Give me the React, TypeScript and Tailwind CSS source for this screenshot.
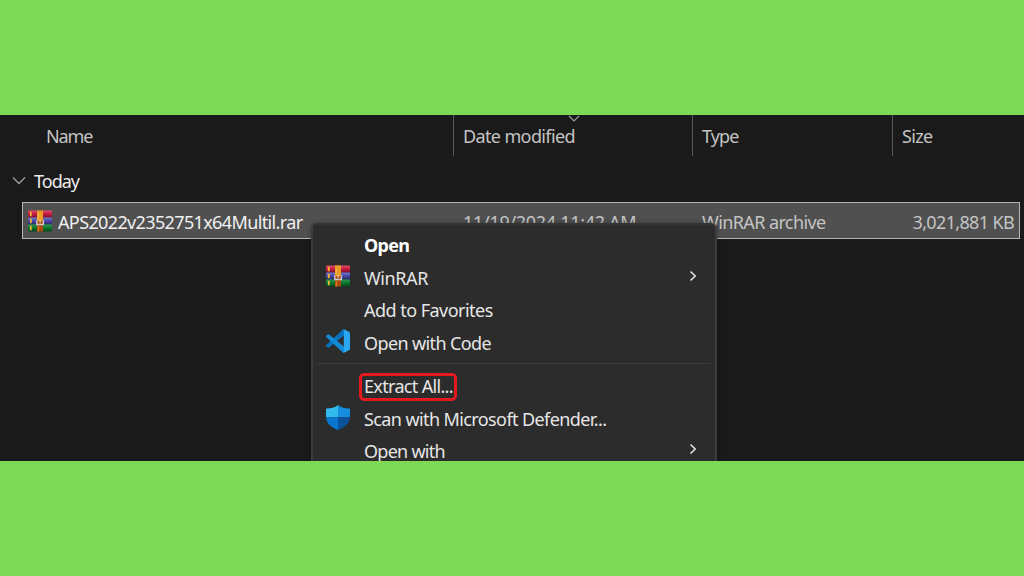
import type { ReactNode } from "react";

function ArchiveIcon() {
  return (
    <svg viewBox="0 0 24 22" className="block h-[22px] w-6 shrink-0">
      <defs>
        <linearGradient id="red" x1="0" y1="0" x2="0" y2="1">
          <stop offset="0" stopColor="#e0506a" />
          <stop offset=".45" stopColor="#cb1f45" />
          <stop offset="1" stopColor="#7a1029" />
        </linearGradient>
        <linearGradient id="blue" x1="0" y1="0" x2="0" y2="1">
          <stop offset="0" stopColor="#7878cc" />
          <stop offset=".45" stopColor="#4a4aae" />
          <stop offset="1" stopColor="#292665" />
        </linearGradient>
        <linearGradient id="green" x1="0" y1="0" x2="0" y2="1">
          <stop offset="0" stopColor="#2f9a50" />
          <stop offset=".45" stopColor="#0b7a31" />
          <stop offset="1" stopColor="#06461b" />
        </linearGradient>
      </defs>
      <rect x="0" y="0.5" width="24" height="7" rx="0.8" fill="url(#red)" />
      <rect x="0" y="7.5" width="24" height="7" rx="0.8" fill="url(#blue)" />
      <rect x="0" y="14.5" width="24" height="7" rx="0.8" fill="url(#green)" />
      <path d="M2.8 1.7v4.6M2.8 8.7v4.6M2.8 15.7v4.6" stroke="#f5b52c" strokeWidth="1.8" />
      <rect x="9" y="0.5" width="6" height="21" fill="#a9480f" />
      <rect x="9" y="0.5" width="6" height="2.5" fill="#d9a32c" />
      <rect x="9" y="2.5" width="6" height="8.5" rx="1" fill="#ee9a26" />
      <path d="M10.2 3.5v6" stroke="#f8bd55" strokeWidth="1" />
      <path d="M8.8 10.2v4.3h6.6v-4.3" fill="none" stroke="#cfc9cc" strokeWidth="1.4" />
      <path d="M12.1 10v2.8" stroke="#e9dccb" strokeWidth="1.2" />
      <path d="M10.4 16v5.5" stroke="#d8731b" strokeWidth="1.6" />
    </svg>
  );
}

function CodeIcon() {
  return (
    <svg viewBox="0 0 24 24" className="block h-6 w-6 shrink-0">
      <path d="M18 6.6 3.1 18.4Q2.2 19 1.4 18.3L.3 17.2Q-.3 16.4.4 15.7L16.6.8 18 .3Z" fill="#0971b9" />
      <path d="M18 17.4 3.1 5.6Q2.2 5 1.4 5.7L.3 6.8Q-.3 7.6.4 8.3L16.6 23.2 18 23.7Z" fill="#128ad6" />
      <path d="M18 .3 23 2.7Q24 3.2 24 4.3V19.7Q24 20.8 23 21.3L18 23.7Q17.1 24 16.5 23.3 17.8 24 17.8 22.2V1.8Q17.8 0 16.5.7 17.1 0 18 .3Z" fill="#2ba7f2" />
    </svg>
  );
}

function ShieldIcon() {
  return (
    <svg viewBox="0 0 24 25" className="block h-[25px] w-6 shrink-0">
      <defs>
        <clipPath id="shield">
          <path d="M12 0C15.5 2.6 18.7 3.5 23.2 3.5Q24 3.5 24 4.3V11C24 18.3 19 22.4 12 25 5 22.4 0 18.3 0 11V4.3Q0 3.5.8 3.5C5.3 3.5 8.5 2.6 12 0Z" />
        </clipPath>
      </defs>
      <g clipPath="url(#shield)">
        <path d="M0 0h12v12.2H0z" fill="#32b9ed" />
        <path d="M12 0h12v12.2H12z" fill="#168de0" />
        <path d="M0 12.2h12V25H0z" fill="#0876ce" />
        <path d="M12 12.2h12V25H12z" fill="#0b529c" />
      </g>
    </svg>
  );
}

function Chevron() {
  return (
    <svg viewBox="0 0 8 12" className="mr-[18px] -mt-[5px] h-3 w-2" fill="none" stroke="#e2e2e2" strokeWidth="1.6">
      <path d="m1.5 1.5 4.7 4.5-4.7 4.5" />
    </svg>
  );
}

function MenuItem({ icon, arrow, children }: { icon?: ReactNode; arrow?: boolean; children: ReactNode }) {
  return (
    <div className="flex h-[32.5px] shrink-0 items-center whitespace-nowrap">
      <div className="-mt-1 ml-[13px] w-[38px] shrink-0">{icon}</div>
      <div className="flex-1">{children}</div>
      {arrow && <Chevron />}
    </div>
  );
}

function ContextMenu() {
  return (
    <div className="absolute top-[108px] left-[311px] flex h-[260px] w-[406px] flex-col rounded-t-md border-2 border-[#3c3c3c] border-t-[#343434] bg-[#2c2c2c] pt-[4.5px] text-[18px] text-[#e6e6e6] shadow-[0_0_4px_#00000055]">
      <MenuItem><b className="font-bold tracking-[-0.7px] text-white">Open</b></MenuItem>
      <MenuItem icon={<ArchiveIcon />} arrow><span className="tracking-[-0.4px]">WinRAR</span></MenuItem>
      <MenuItem><span className="tracking-[-0.53px]">Add to Favorites</span></MenuItem>
      <MenuItem icon={<CodeIcon />}><span className="tracking-[-0.62px]">Open with Code</span></MenuItem>
      <div className="mx-[4px] mt-[3px] mb-[7px] h-px shrink-0 bg-[#3b3b3b]" />
      <MenuItem>
        <span className="-ml-[5px] flex h-[28px] w-[98px] items-center rounded-[5px] border-[3px] border-[#e3191f] pl-[2px] tracking-[-0.67px]">Extract All...</span>
      </MenuItem>
      <MenuItem icon={<ShieldIcon />}><span className="tracking-[-0.6px]">Scan with Microsoft Defender...</span></MenuItem>
      <MenuItem arrow><span className="tracking-[-0.73px]">Open with</span></MenuItem>
    </div>
  );
}

export default function App() {
  return (
    <div className="flex h-[576px] w-[1024px] flex-col bg-[#7ed957] pt-[115px] font-['Noto_Sans','Open_Sans',sans-serif]">
      <main className="relative h-[346px] overflow-hidden bg-[#1a1a1a] text-[18px] whitespace-nowrap text-[#c4c4c4]">
        <header className="grid h-[41px] grid-cols-[453px_239px_200px_1fr] grid-rows-[41px] leading-[43px]">
          <div className="pl-[46px]"><span className="tracking-[-1.15px]">Name</span></div>
          <div className="flex border-l border-[#565656] pl-[9px]">
            <span className="tracking-[-0.63px]">Date modified</span>
            <svg viewBox="0 0 12 7" className="-ml-[7px] h-[7px] w-3" fill="none" stroke="#999" strokeWidth="1.2">
              <path d="m1 1 5 5 5-5" />
            </svg>
          </div>
          <div className="border-l border-[#565656] pl-[9px]"><span className="tracking-[-0.9px]">Type</span></div>
          <div className="border-l border-[#565656] pl-[9px]"><span className="tracking-[-0.65px]">Size</span></div>
        </header>
        <div className="flex h-[46px] items-center pt-[5px] pl-3 text-[#ececec]">
          <svg viewBox="0 0 14 9" className="mr-2 -mt-[3px] h-[9px] w-[14px]" fill="none" stroke="#a0a0a0" strokeWidth="1.3">
            <path d="m1 1.5 6 6 6-6" />
          </svg>
          <span className="tracking-[-1px]">Today</span>
        </div>
        <div className="ml-[22px] grid h-[37px] w-[998px] grid-cols-[440px_239px_1fr_auto] items-center border border-[#b4b4b4] bg-[#505050] pt-[3px] pr-[5px]">
          <div className="flex items-center text-[#f0f0f0]">
            <span className="-mt-[3px] ml-[5px] mr-[6px]"><ArchiveIcon /></span>
            <span className="tracking-[-0.63px]">APS2022v2352751x64Multil.rar</span>
          </div>
          <div><span className="tracking-[-0.3px]">11/19/2024 11:42 AM</span></div>
          <div><span className="tracking-[-0.6px]">WinRAR archive</span></div>
          <div><span className="tracking-[-0.65px]">3,021,881 KB</span></div>
        </div>
        <ContextMenu />
      </main>
    </div>
  );
}
